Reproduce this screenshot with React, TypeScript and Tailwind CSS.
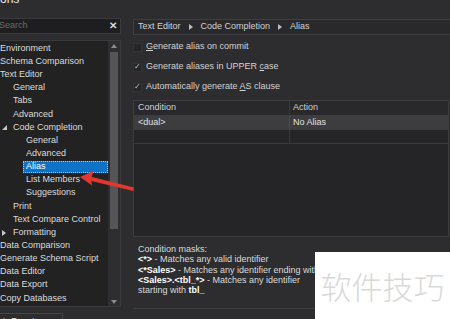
import React from "react"

type Node = { label: string; level: number; expander?: "open" | "closed"; selected?: boolean }

const treeItems: Node[] = [
  { label: "Environment", level: 0 },
  { label: "Schema Comparison", level: 0 },
  { label: "Text Editor", level: 0 },
  { label: "General", level: 1 },
  { label: "Tabs", level: 1 },
  { label: "Advanced", level: 1 },
  { label: "Code Completion", level: 1, expander: "open" },
  { label: "General", level: 2 },
  { label: "Advanced", level: 2 },
  { label: "Alias", level: 2, selected: true },
  { label: "List Members", level: 2 },
  { label: "Suggestions", level: 2 },
  { label: "Print", level: 1 },
  { label: "Text Compare Control", level: 1 },
  { label: "Formatting", level: 1, expander: "closed" },
  { label: "Data Comparison", level: 0 },
  { label: "Generate Schema Script", level: 0 },
  { label: "Data Editor", level: 0 },
  { label: "Data Export", level: 0 },
  { label: "Copy Databases", level: 0 },
]

const indent = ["pl-[6px]", "pl-[19px]", "pl-[32px]"]

function Expander({ kind }: { kind: "open" | "closed" }) {
  return (
    <span className="absolute left-[8px] top-0 flex h-full items-center">
      {kind === "open" ? (
        <svg width="5" height="5" viewBox="0 0 5 5">
          <path d="M5 0 L5 5 L0 5 Z" fill="#c8c8c8" />
        </svg>
      ) : (
        <svg width="4" height="6" viewBox="0 0 4 6">
          <path d="M0 0 L4 3 L0 6 Z" fill="#c8c8c8" />
        </svg>
      )}
    </span>
  )
}

function Check({ checked, children }: { checked?: boolean; children: React.ReactNode }) {
  return (
    <div className="flex h-[20px] items-center">
      <span className="flex h-[9px] w-[9px] items-center justify-center border border-[#333336] bg-[#262628] text-[8px] leading-none text-[#bdbdbd]">
        {checked ? "✓" : ""}
      </span>
      <span className="ml-[4px] text-[#d2d2d2]">{children}</span>
    </div>
  )
}

function Crumb() {
  return (
    <svg width="4" height="6" viewBox="0 0 4 6" className="mx-[8px]">
      <path d="M0 0 L4 3 L0 6 Z" fill="#bdbdbd" />
    </svg>
  )
}

export default function App() {
  return (
    <div className="relative h-[319px] w-[450px] overflow-hidden bg-[#2d2d30] font-['Liberation_Sans',Arial,sans-serif] text-[9px] text-[#dcdcdc]">
      {/* window title, mostly scrolled off */}
      <div className="h-[18px] overflow-hidden">
        <div className="-mt-[7px] ml-[-22px] text-[12px] leading-[12px] text-[#e8e8e8]">Options</div>
      </div>

      <div className="ml-[-7px] flex gap-[12px]">
        {/* left column */}
        <div className="flex w-[128px] shrink-0 flex-col">
          <div className="flex h-[16px] items-center justify-between border border-[#3a3a3e] bg-[#1e1e20] pl-[5px] pr-[3px]">
            <span className="text-[#6a6a6a]">Search</span>
            <span className="text-[10px] font-bold leading-none text-[#d8d8d8]">✕</span>
          </div>

          <div className="mt-[6px] flex h-[267px] border border-[#3a3a3e] bg-[#222223]">
            <div className="flex-1 overflow-hidden pt-[1px]">
              {treeItems.map((n, i) => (
                <div key={i} className={`relative flex h-[13.15px] items-center ${indent[n.level]}`}>
                  {n.expander && <Expander kind={n.expander} />}
                  {n.selected ? (
                    <span className="-ml-[3px] flex h-[12px] w-[86px] items-center border border-dotted border-[#9fcaf2] bg-[#0e72c6] pl-[2px] text-white">
                      {n.label}
                    </span>
                  ) : (
                    <span className="whitespace-nowrap">{n.label}</span>
                  )}
                </div>
              ))}
            </div>
            <div className="flex w-[12px] flex-col items-center bg-[#2e2e31] pb-[2px] pt-[3px]">
              <svg width="6" height="4" viewBox="0 0 6 4">
                <path d="M0 4 L3 0 L6 4 Z" fill="#8a8a8a" />
              </svg>
              <div className="mt-[4px] h-[177px] w-[8px] bg-[#555558]" />
              <div className="flex-1" />
              <svg width="6" height="4" viewBox="0 0 6 4">
                <path d="M0 0 L3 4 L6 0 Z" fill="#8a8a8a" />
              </svg>
            </div>
          </div>

          <div className="mt-[6px] flex h-[16px] w-[70px] items-start border border-[#45454a] pl-[6px] pt-[1px] text-[#e0e0e0]">
            <span className="mr-[3px]">⊥</span>Reset Default
          </div>
        </div>

        {/* right column */}
        <div className="flex w-[330px] shrink-0 flex-col">
          <div className="mt-[1px] flex h-[16px] items-center border border-[#3f3f43] bg-[#29292c] pl-[4px] text-[#d2d2d2]">
            <span>Text Editor</span>
            <Crumb />
            <span>Code Completion</span>
            <Crumb />
            <span>Alias</span>
          </div>

          <div className="mt-[2px]">
            <Check>
              <u>G</u>enerate alias on commit
            </Check>
            <Check checked>
              Generate aliases in UPPER <u>c</u>ase
            </Check>
            <Check checked>
              Automatically generate <u>A</u>S clause
            </Check>
          </div>

          <div className="mt-[3px] flex h-[137px] w-[316px] flex-col border border-[#3c3c40] bg-[#252527]">
            <div className="flex h-[14px] bg-[#29292b] text-[#d0d0d0]">
              <div className="flex w-[156px] items-center border-r border-[#3a3a3c] pl-[4px]">Condition</div>
              <div className="flex flex-1 items-center pl-[3px]">Action</div>
            </div>
            <div className="flex h-[15px] bg-[#3d3d3f] text-[#e2e2e2]">
              <div className="flex w-[156px] items-center border-r border-[#4a4a4c] pl-[4px]">&lt;dual&gt;</div>
              <div className="flex flex-1 items-center pl-[3px]">No Alias</div>
            </div>
            <div className="flex h-[14px] border-b border-[#3a3a3c]">
              <div className="w-[156px] border-r border-[#3a3a3c]" />
            </div>
          </div>

          <div className="mt-[7px] w-[182px] overflow-hidden pl-[5px] leading-[10.3px] text-[#dadada]">
            <div>Condition masks:</div>
            <div className="whitespace-nowrap">
              <b className="text-white">&lt;*&gt;</b> - Matches any valid identifier
            </div>
            <div className="whitespace-nowrap">
              <b className="text-white">&lt;*Sales&gt;</b> - Matches any identifier ending with Sales
            </div>
            <div className="whitespace-nowrap">
              <b className="text-white">&lt;Sales&gt;.&lt;tbl_*&gt;</b> - Matches any identifier
            </div>
            <div>
              starting with <b className="text-white">tbl_</b>
            </div>
          </div>

          <div className="mt-[13px] border-t border-[#3f3f43]" />
        </div>
      </div>

      {/* watermark */}
      <div className="absolute left-[315px] top-[252px] flex h-[67px] w-[135px] items-center justify-center bg-white">
        <span className="font-['Noto_Sans_CJK_SC',sans-serif] text-[31px] font-light leading-none text-[#d9d9d9]">
          软件技巧
        </span>
      </div>

      {/* red annotation arrow */}
      <svg className="pointer-events-none absolute left-0 top-0" width="450" height="319" viewBox="0 0 450 319">
        <path d="M90 176.5 L134 187.5 L133.5 191 L89 180.5 Z" fill="#e0372f" />
        <path d="M80 177 L94 170.5 L91 178.5 L92 185.5 Z" fill="#e0372f" />
      </svg>
    </div>
  )
}
